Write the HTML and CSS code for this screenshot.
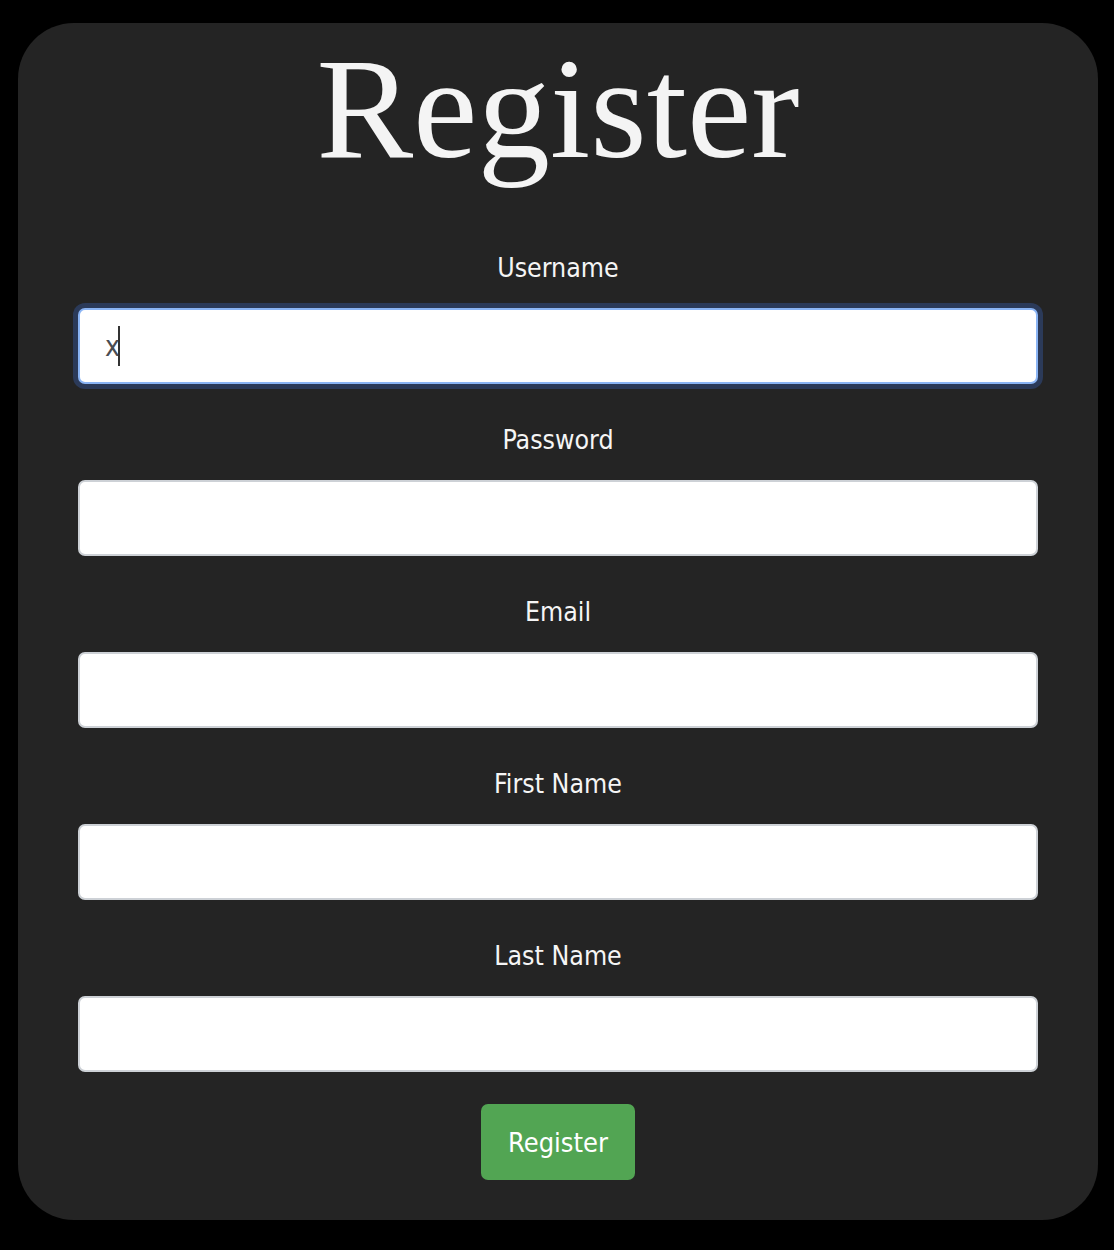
FILE: index.html
```html
<!DOCTYPE html>
<html>
<head>
<meta charset="utf-8">
<title>Register</title>
<link rel="stylesheet" href="styles.css">
</head>
<body>
<main class="card">
  <h1 class="title">Register</h1>
  <form class="form">
    <div class="field">
      <label class="label" for="username">Username</label>
      <div class="input-wrap">
        <input class="input is-focused" id="username" type="text" value="x">
        <span class="caret"></span>
      </div>
    </div>
    <div class="field">
      <label class="label" for="password">Password</label>
      <input class="input" id="password" type="password">
    </div>
    <div class="field">
      <label class="label" for="email">Email</label>
      <input class="input" id="email" type="email">
    </div>
    <div class="field">
      <label class="label" for="first">First Name</label>
      <input class="input" id="first" type="text">
    </div>
    <div class="field">
      <label class="label" for="last">Last Name</label>
      <input class="input" id="last" type="text">
    </div>
    <button class="btn" type="button">Register</button>
  </form>
</main>
</body>
</html>
```

FILE: styles.css
```css
html, body {
  margin: 0;
  padding: 0;
  background: #000;
}
body {
  padding: 23px 16px 30px 18px;
}
.card {
  width: 1080px;
  height: 1197px;
  box-sizing: border-box;
  background: #242424;
  border-radius: 56px;
  padding: 0 60px;
  display: flex;
  flex-direction: column;
  align-items: stretch;
}
.title {
  margin: 0;
  font-family: "Liberation Serif", "Times New Roman", serif;
  font-weight: 400;
  font-size: 145px;
  line-height: 170px;
  color: #f4f4f4;
  text-align: center;
}
.form {
  display: flex;
  flex-direction: column;
  margin-top: 57px;
}
.field {
  display: flex;
  flex-direction: column;
  align-items: stretch;
  margin-bottom: 38px;
}
.label {
  font-family: "Liberation Sans Narrow", "DejaVu Sans Condensed", sans-serif;
  font-size: 26.5px;
  line-height: 36px;
  color: #f5f5f5;
  text-align: center;
  margin-bottom: 22px;
}
.input-wrap {
  position: relative;
}
.input {
  display: block;
  width: 100%;
  height: 76px;
  box-sizing: border-box;
  border: 2px solid #cdd1d6;
  border-radius: 7px;
  background: #fff;
  padding: 0 25px;
  font-family: "Liberation Sans Narrow", "DejaVu Sans Condensed", sans-serif;
  font-size: 28px;
  color: #4a4d52;
  outline: none;
}
.input.is-focused {
  border-color: #8ab4f4;
  box-shadow: 0 0 0 5px #2b3a59;
}
.caret {
  position: absolute;
  left: 40px;
  top: 18px;
  width: 2px;
  height: 40px;
  background: #333;
}
.btn {
  align-self: center;
  width: 154px;
  height: 76px;
  margin-top: -6px;
  border: 0;
  border-radius: 7px;
  background: #52a553;
  color: #fff;
  font-family: "Liberation Sans Narrow", "DejaVu Sans Condensed", sans-serif;
  font-size: 27px;
}
```
